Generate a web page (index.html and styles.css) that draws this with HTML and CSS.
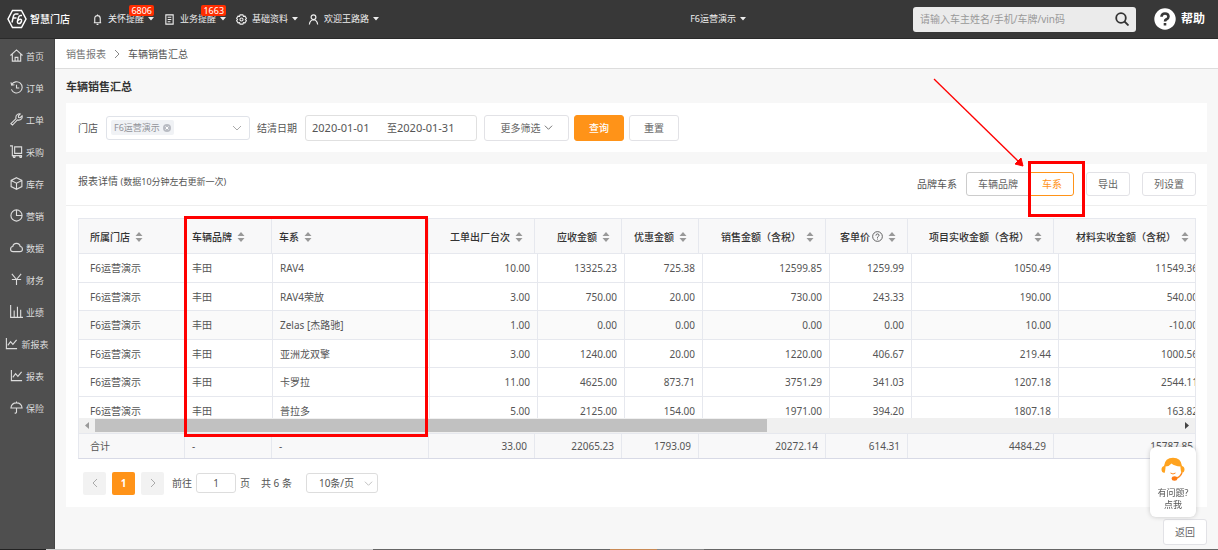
FILE: index.html
```html
<!DOCTYPE html>
<html lang="zh-CN">
<head>
<meta charset="utf-8">
<title>车辆销售汇总</title>
<link rel="stylesheet" href="styles.css">
</head>
<body>
<svg class="defs" aria-hidden="true">
  <symbol id="caret" viewBox="0 0 6 4"><path d="M0 0h6L3 3.500z" fill="currentColor"/></symbol>
  <symbol id="down" viewBox="0 0 10 10"><path d="M1 3l4 4 4-4" fill="none" stroke="currentColor"/></symbol>
  <symbol id="sorter" viewBox="0 0 8 10"><path d="M4 0l3.500 4h-7zM4 10l3.500-4h-7z" fill="#999"/></symbol>
  <symbol id="chart" viewBox="0 0 14 14"><path d="M1.500 1v11.500H13M3 9l3-4 2.500 3L12.500 3" fill="none" stroke="currentColor" stroke-width="1.200"/></symbol>
</svg>

<header class="topbar">
  <a class="logo" href="#">
    <svg width="20" height="20" viewBox="0 0 20 20" fill="none" stroke="#fff" stroke-width="1.500"><path d="M5.500 1.500h9L19 10l-4.500 8.500h-9L1 10z"/><path d="M11.500 5H8.500Q7 5 6.500 7L5 13.500M5.500 9h4M15 6.500h-1.500Q12 6.500 11.500 8.500L10.500 12q-.5 2.500 1.500 2.500T14.500 12q.3-1.700-1.200-1.700T11 11.500"/></svg>
    <span>智慧门店</span>
  </a>
  <nav class="menus">
    <button class="menu"><svg width="11" height="11" viewBox="0 0 12 12" fill="none" stroke="currentColor" stroke-width="1.200"><path d="M2 9.500h8M3 9.500V5q0-3.200 3-3.200T9 5v4.500M5 11.300h2M6 .5v1.300"/></svg><span>关怀提醒</span><svg width="6" height="4"><use href="#caret"/></svg><b class="badge">6806</b></button>
    <button class="menu"><svg width="11" height="11" viewBox="0 0 12 12" fill="none" stroke="currentColor" stroke-width="1.200"><path d="M2 1h8v10H2zM4 3.500h4M4 6h4M4 8.500h3"/></svg><span>业务提醒</span><svg width="6" height="4"><use href="#caret"/></svg><b class="badge">1663</b></button>
    <button class="menu"><svg width="11" height="11" viewBox="0 0 12 12" fill="none" stroke="currentColor" stroke-width="1.200"><path d="M4.500 1h3l.6 1.500 1.700-.2 1.500 2.400L10.300 6l1 1.300-1.500 2.400-1.700-.2L7.500 11h-3l-.6-1.500-1.700.2L.7 7.300 1.700 6 .7 4.700l1.500-2.400 1.700.2z"/><circle cx="6" cy="6" r="1.700"/></svg><span>基础资料</span><svg width="6" height="4"><use href="#caret"/></svg></button>
    <button class="menu"><svg width="11" height="11" viewBox="0 0 12 12" fill="none" stroke="currentColor" stroke-width="1.300"><circle cx="6" cy="3.500" r="2.600"/><path d="M1.500 11.500Q2 6.500 6 6.300q4 .2 4.500 5.200"/></svg><span>欢迎王路路</span><svg width="6" height="4"><use href="#caret"/></svg></button>
  </nav>
  <button class="menu store">F6运营演示<svg width="6" height="4"><use href="#caret"/></svg></button>
  <form class="search">
    <input type="text" aria-label="搜索" placeholder="请输入车主姓名/手机/车牌/vin码">
    <button type="button" aria-label="查找"><svg width="14" height="14" viewBox="0 0 14 14" fill="none" stroke="#333" stroke-width="1.800"><circle cx="6" cy="6" r="4.800"/><path d="M9.500 9.500l4 4"/></svg></button>
  </form>
  <a class="help" href="#"><svg width="22" height="22" viewBox="0 0 22 22"><circle cx="11" cy="11" r="10.700" fill="#fff"/><path d="M7.500 8.800Q7.500 5.500 11 5.500t3.500 3Q14.500 10.300 12.500 11.300 11 12 11 13.500" fill="none" stroke="#383838" stroke-width="2.600"/><path d="M9.700 15h2.600v2.500H9.700z" fill="#383838"/></svg>帮助</a>
</header>

<div class="shell">
  <nav class="sidebar">
    <a href="#"><svg viewBox="0 0 14 14"><path d="M.5 7L7 1l6.500 6M2.500 5.500V13h9V5.500M5.500 13V9h3v4"/></svg>首页</a>
    <a href="#"><svg viewBox="0 0 14 14"><path d="M1.800 4A6 6 0 1 1 1.500 9M1 1.500l.8 3 3-.5M7 4v3.500h3"/></svg>订单</a>
    <a href="#"><svg viewBox="0 0 14 14"><path d="M1 11.500L6.500 6Q5.700 3 8 1.500q1.500-1 3-.5L9 3.200l.3 1.600 1.600.3L13 3q.5 1.800-.6 3.300Q10.800 8.200 8 7.500L2.700 13z"/></svg>工单</a>
    <a href="#"><svg viewBox="0 0 14 14"><path d="M0 1h2.500v10.500H13M5 2h7.500v7H5z"/><circle cx="4.500" cy="12.500" r="1"/><circle cx="11.500" cy="12.500" r="1"/></svg>采购</a>
    <a href="#"><svg viewBox="0 0 14 14"><path d="M7 .7l5.800 3v6.600l-5.800 3-5.800-3V3.700zM1.200 3.700L7 6.700l5.800-3M7 6.700v6.600"/></svg>库存</a>
    <a href="#"><svg viewBox="0 0 14 14"><circle cx="7" cy="7" r="6"/><path d="M7 1v6h6"/></svg>营销</a>
    <a href="#"><svg viewBox="0 0 14 14"><path d="M3.500 11.500Q.6 11.300.6 8.800T3 6Q3.500 2.500 7 2.500T11 6q2.400.3 2.400 2.800t-2.900 2.700z"/></svg>数据</a>
    <a href="#"><svg viewBox="0 0 14 14"><path d="M2 1l5 6 5-6M7 7v6M2 7h10"/></svg>财务</a>
    <a href="#"><svg viewBox="0 0 14 14"><path d="M.7 0v13.300H14M4.500 13V6M8 13V2M11.500 13V5"/></svg>业绩</a>
    <a href="#"><svg viewBox="0 0 14 14"><use href="#chart"/></svg>新报表</a>
    <a href="#"><svg viewBox="0 0 14 14"><use href="#chart"/></svg>报表</a>
    <a href="#"><svg viewBox="0 0 14 14"><path d="M1 7.500Q1.500 2 7 2t6 5.500zM7 .5V2M7 7.500V12q-.2 1.300-2 1"/></svg>保险</a>
  </nav>

  <main class="main">
    <nav class="crumbs"><a href="#">销售报表</a><svg width="6" height="10" viewBox="0 0 6 10"><path d="M1 1l4 4-4 4" fill="none" stroke="#888"/></svg><span>车辆销售汇总</span></nav>
    <div class="content">
      <h1>车辆销售汇总</h1>

      <form class="card filters">
        <span id="store-label">门店</span>
        <button type="button" class="multi" role="combobox" aria-labelledby="store-label" aria-expanded="false"><span class="tag">F6运营演示<svg width="8" height="8" viewBox="0 0 8 8"><circle cx="4" cy="4" r="4" fill="#b9bcc3"/><path d="M2.500 2.500l3 3m0-3l-3 3" stroke="#fff"/></svg></span><svg width="10" height="10"><use href="#down"/></svg></button>
        <label for="from">结清日期</label>
        <span class="range"><input id="from" type="text" value="2020-01-01"><label for="to">至</label><input id="to" type="text" value="2020-01-31"></span>
        <button type="button" class="btn tall more">更多筛选<svg width="9" height="9"><use href="#down"/></svg></button>
        <button type="button" class="btn tall primary">查询</button>
        <button type="button" class="btn tall">重置</button>
      </form>

      <section class="card">
        <div class="card-head">
          <h2>报表详情 <small>(数据10分钟左右更新一次)</small></h2>
          <div class="tools">
            <span>品牌车系</span>
            <div class="segment">
              <button class="btn">车辆品牌</button><button class="btn active">车系</button>
              <i class="mark mark-button"></i>
              <svg class="arrow" width="92" height="90" viewBox="0 0 92 90"><path d="M1 1l84 82" stroke="#f00" stroke-width="1.300"/><path d="M90 88l-8-2 6-6z" fill="#f00" stroke="#f00"/></svg>
            </div>
            <button class="btn">导出</button>
            <button class="btn">列设置</button>
          </div>
        </div>

        <div class="report">
          <div class="grid">
            <table class="head">
              <colgroup><col class="w106"><col class="w87"><col class="w157"><col class="w106"><col class="w87"><col class="w77"><col class="w127"><col class="w82"><col class="w146"><col class="w147"></colgroup>
              <thead><tr>
                <th><button>所属门店<svg><use href="#sorter"/></svg></button></th>
                <th><button>车辆品牌<svg><use href="#sorter"/></svg></button></th>
                <th><button>车系<svg><use href="#sorter"/></svg></button></th>
                <th><button>工单出厂台次<svg><use href="#sorter"/></svg></button></th>
                <th><button>应收金额<svg><use href="#sorter"/></svg></button></th>
                <th><button>优惠金额<svg><use href="#sorter"/></svg></button></th>
                <th><button>销售金额（含税）<svg><use href="#sorter"/></svg></button></th>
                <th><button>客单价<svg class="tip" viewBox="0 0 12 12" fill="none" stroke="#555"><circle cx="6" cy="6" r="5.300"/><path d="M4.300 5Q4.300 3.200 6 3.200T7.700 4.800Q7.700 5.500 6 6.600v.9M6 8.300v1"/></svg><svg><use href="#sorter"/></svg></button></th>
                <th><button>项目实收金额（含税）<svg><use href="#sorter"/></svg></button></th>
                <th><button>材料实收金额（含税）<svg><use href="#sorter"/></svg></button></th>
              </tr></thead>
            </table>
            <div class="rows">
              <table>
                <colgroup><col class="w106"><col class="w88"><col class="w157"><col class="w108"><col class="w87"><col class="w78"><col class="w127"><col class="w82"><col class="w147"><col class="w147"></colgroup>
                <tbody>
                  <tr><td>F6运营演示</td><td>丰田</td><td>RAV4</td><td>10.00</td><td>13325.23</td><td>725.38</td><td>12599.85</td><td>1259.99</td><td>1050.49</td><td>11549.36</td></tr>
                  <tr><td>F6运营演示</td><td>丰田</td><td>RAV4荣放</td><td>3.00</td><td>750.00</td><td>20.00</td><td>730.00</td><td>243.33</td><td>190.00</td><td>540.00</td></tr>
                  <tr class="hover"><td>F6运营演示</td><td>丰田</td><td>Zelas [杰路驰]</td><td>1.00</td><td>0.00</td><td>0.00</td><td>0.00</td><td>0.00</td><td>10.00</td><td>-10.00</td></tr>
                  <tr><td>F6运营演示</td><td>丰田</td><td>亚洲龙双擎</td><td>3.00</td><td>1240.00</td><td>20.00</td><td>1220.00</td><td>406.67</td><td>219.44</td><td>1000.56</td></tr>
                  <tr><td>F6运营演示</td><td>丰田</td><td>卡罗拉</td><td>11.00</td><td>4625.00</td><td>873.71</td><td>3751.29</td><td>341.03</td><td>1207.18</td><td>2544.11</td></tr>
                  <tr><td>F6运营演示</td><td>丰田</td><td>普拉多</td><td>5.00</td><td>2125.00</td><td>154.00</td><td>1971.00</td><td>394.20</td><td>1807.18</td><td>163.82</td></tr>
                </tbody>
              </table>
            </div>
            <div class="scrollbar">
              <svg viewBox="0 0 16 15"><path d="M10 4v7L6 7.500z" fill="#999"/></svg>
              <div class="track"><div class="thumb"></div></div>
              <svg viewBox="0 0 16 15"><path d="M6 4v7l4-3.500z" fill="#444"/></svg>
            </div>
            <table class="total">
              <colgroup><col class="w106"><col class="w87"><col class="w157"><col class="w106"><col class="w87"><col class="w77"><col class="w127"><col class="w82"><col class="w146"><col class="w147"></colgroup>
              <tbody><tr><td>合计</td><td>-</td><td>-</td><td>33.00</td><td>22065.23</td><td>1793.09</td><td>20272.14</td><td>614.31</td><td>4484.29</td><td>15787.85</td></tr></tbody>
            </table>
          </div>
          <i class="mark mark-columns"></i>
        </div>

        <div class="pager">
          <button class="page" aria-label="上一页" disabled><svg width="10" height="10" viewBox="0 0 10 10"><path d="M7 1L3 5l4 4" fill="none" stroke="#aaa"/></svg></button>
          <button class="page current">1</button>
          <button class="page" aria-label="下一页" disabled><svg width="10" height="10" viewBox="0 0 10 10"><path d="M3 1l4 4-4 4" fill="none" stroke="#aaa"/></svg></button>
          <label class="jump">前往<input type="text" value="1">页</label>
          <span class="count">共 6 条</span>
          <span class="size"><select aria-label="每页条数"><option>10条/页</option></select><svg width="9" height="9"><use href="#down"/></svg></span>
        </div>
      </section>

      <div class="actions"><button class="btn tall back">返回</button></div>
    </div>
  </main>
</div>
<footer class="strip"></footer>

<button class="service">
  <svg width="24" height="24" viewBox="0 0 24 24"><path d="M3 9Q4 .8 12 .8T21 9q2.500.5 2.500 3.500T20.500 16L19 11H5l-1.500 5Q.5 15.500.5 12.500T3 9z" fill="#ffa31f"/><path d="M4.500 12.500V9.500q4-.3 6-3 3 2.700 9 3v3q0 7-7.500 7t-7.500-7z" fill="#fff"/><path d="M9.500 16q2.500 2 5 0" fill="none" stroke="#ff8a1f"/><path d="M21 15.500q-1.500 5-7 6" fill="none" stroke="#ff8a1f" stroke-width="1.400"/><ellipse cx="13.500" cy="21.500" rx="2.800" ry="2.200" fill="#ff7a12"/></svg>
  <span>有问题?</span><span>点我</span>
</button>
</body>
</html>
```
FILE: styles.css
```css
* { box-sizing: border-box; }
body {
  margin: 0;
  min-height: 100vh;
  display: flex;
  flex-direction: column;
  background: #f7f7f7;
  color: #555;
  font: 10px/16px "Noto Sans", "Noto Sans CJK SC", sans-serif;
  overflow-x: hidden;
}
button, input, select { font: inherit; color: inherit; margin: 0; padding: 0; }
button { background: none; border: 0; white-space: nowrap; }
a { color: inherit; text-decoration: none; }
svg { flex: none; display: block; }
.defs { position: absolute; width: 0; height: 0; }

.topbar {
  height: 39px;
  display: flex;
  align-items: center;
  padding: 0 13px 0 7px;
  background: #383838;
  border-bottom: 1px solid #2a2a2a;
  color: #fff;
}
.logo { display: flex; align-items: center; gap: 3px; font-weight: 500; }
.menus { display: flex; gap: 10px; margin-left: 22px; }
.menu { position: relative; display: flex; align-items: center; gap: 4px; font-size: 9px; color: #eee; }
.menus svg + span { margin-left: 1px; }
.badge {
  position: absolute;
  top: -6px;
  right: 0;
  padding: 0 2px;
  border-radius: 2px;
  background: #ff2d00;
  color: #fff;
  font-size: 9px;
  font-weight: 400;
  line-height: 11px;
}
.store { margin-left: auto; margin-right: 167px; }
.search {
  display: flex;
  align-items: center;
  width: 223px;
  height: 25px;
  padding: 0 7px;
  border-radius: 3px;
  background: #ebebeb;
}
.search input { flex: 1; min-width: 0; border: 0; background: none; outline: 0; }
.search input::placeholder { color: #999; }
.help { display: flex; align-items: center; gap: 5px; margin-left: 18px; font-size: 12px; font-weight: 700; }

.shell { flex: 1; display: flex; }
.sidebar { width: 55px; flex: none; padding-top: 1px; background: #4f4f4f; border-right: 1px solid #444; color: #ddd; font-size: 9px; }
.sidebar a { height: 32px; display: flex; align-items: center; justify-content: center; gap: 3px; line-height: 12px; padding-top: 2px; }
.sidebar svg { width: 13px; height: 13px; margin-bottom: 3px; fill: none; stroke: currentColor; stroke-width: 1.2; }

.main { flex: 1; min-width: 0; display: flex; flex-direction: column; }
.crumbs { height: 30px; display: flex; align-items: center; gap: 8px; padding: 0 11px; background: #fff; border-bottom: 1px solid #ddd; color: #777; }
.crumbs span { color: #555; }
.content { padding: 10px 11px 0; }
h1 { margin: 0 0 8px; font-size: 11px; line-height: 16px; font-weight: 700; color: #333; }
.card { margin-bottom: 12px; background: #fff; }

.filters { height: 49px; display: flex; align-items: center; padding: 0 12px; }
.multi {
  display: flex;
  align-items: center;
  justify-content: space-between;
  width: 144px;
  height: 24px;
  margin: 0 7px 0 8px;
  padding: 0 7px 0 4px;
  border: 1px solid #e0e3e9;
  border-radius: 3px;
  color: #aaa;
}
.tag { display: flex; align-items: center; gap: 3px; padding: 0 3px; border-radius: 2px; background: #f0f2f5; color: #909399; font-size: 9px; line-height: 15px; }
.range { display: flex; align-items: center; width: 172px; height: 26px; margin: 0 7px 0 8px; padding: 0 6px; border: 1px solid #e0e0e0; border-radius: 3px; }
.range input { width: 75px; border: 0; outline: 0; background: none; font-size: 11px; }
.btn {
  display: flex;
  align-items: center;
  justify-content: center;
  gap: 3px;
  height: 24px;
  padding: 0 11px;
  border: 1px solid #e2e2e6;
  border-radius: 3px;
  background: #fff;
  color: #666;
}
.tall { height: 26px; padding: 0 14px; margin-right: 5px; }
.more { width: 85px; }
.primary { border-color: #ff9318; background: #ff9318; color: #fff; font-weight: 500; }

.card-head { height: 42px; display: flex; align-items: center; justify-content: space-between; padding: 0 11px 2px 12px; border-bottom: 1px solid #eee; }
h2 { margin: 0; padding-bottom: 4px; font-size: 10px; font-weight: 400; }
small { font-size: 9px; }
.tools { display: flex; align-items: center; gap: 12px; }
.tools > span { margin-right: -3px; }
.segment { position: relative; display: flex; }
.segment .btn { border-radius: 3px 0 0 3px; border-color: #ccc; }
.segment .active { border-radius: 0 3px 3px 0; border-color: #ff9318; color: #ff9318; }
.mark { position: absolute; border: 3px solid #f00; pointer-events: none; }
.mark-button { top: -11px; right: -11px; width: 57px; height: 56px; }
.arrow { position: absolute; right: 49px; bottom: 28px; pointer-events: none; }

.report { position: relative; padding: 12px 11px 0 12px; }
.grid { border: 1px solid #e6e8ee; border-bottom-color: #d8dae6; overflow: hidden; }
.mark-columns { left: 118px; top: 10px; width: 244px; bottom: 22px; z-index: 1; }
table { table-layout: fixed; width: 0; border-collapse: separate; border-spacing: 0; }
.w77 { width: 77px; } .w78 { width: 78px; } .w82 { width: 82px; } .w87 { width: 87px; } .w88 { width: 88px; }
.w106 { width: 106px; } .w108 { width: 108px; } .w127 { width: 127px; }
.w146 { width: 146px; } .w147 { width: 147px; } .w157 { width: 157px; }
th, td { padding: 0 7px; border-right: 1px solid #e6e8ee; text-align: right; white-space: nowrap; }
th { height: 35px; padding: 0 11px 0 7px; background: #f8f8f9; border-bottom: 1px solid #e6e8ee; color: #333; font-weight: 500; }
th button { display: inline-flex; align-items: center; gap: 5px; font-weight: 500; vertical-align: middle; }
th svg { width: 8px; height: 10px; }
th .tip { width: 11px; height: 11px; margin-left: -3px; }
th:nth-child(-n+3), td:nth-child(-n+3) { text-align: left; }
th:first-child, td:first-child { padding-left: 11px; }
.rows { height: 164px; overflow: hidden; }
.rows td { height: 29px; border-bottom: 1px solid #e6e8ee; }
.rows tr:nth-child(even) td { height: 28px; }
.hover td { background: #fafafa; }
.scrollbar { display: flex; height: 15px; background: #f0f0f0; }
.scrollbar svg { width: 16px; height: 15px; }
.track { flex: 1; padding: 1px 0; }
.thumb { width: 62%; height: 13px; background: #c1c1c1; }
.total td { height: 25px; background: #f8f8f9; border-top: 1px solid #e6e8ee; }

.pager { display: flex; align-items: center; padding: 12px 17px; height: 48px; }
.page { display: flex; align-items: center; justify-content: center; width: 23px; height: 23px; margin-right: 6px; border-radius: 2px; background: #f2f2f2; }
.current { background: #ff9318; color: #fff; font-weight: 700; }
.jump { display: flex; align-items: center; gap: 4px; margin-left: 2px; }
.jump input { width: 40px; height: 20px; border: 1px solid #ddd; border-radius: 3px; text-align: center; }
.count { margin: 0 14px 0 11px; }
.size { position: relative; color: #bbb; }
.size select { appearance: none; width: 72px; height: 20px; padding-left: 12px; border: 1px solid #ddd; border-radius: 3px; background: #fff; color: #555; }
.size svg { position: absolute; right: 5px; top: 6px; pointer-events: none; }

.actions { display: flex; justify-content: flex-end; padding-bottom: 3px; }
.back { padding: 0 11px; margin: 0; }
.strip {
  height: 1px;
  background: linear-gradient(90deg, #222 0 46px, #ccc 46px 373px, #666 373px 610px, #c98a55 610px 657px, #888 657px 704px, #666 704px);
}
.service {
  position: fixed;
  right: 22px;
  bottom: 33px;
  z-index: 2;
  width: 46px;
  height: 70px;
  display: flex;
  flex-direction: column;
  align-items: center;
  border-radius: 6px;
  background: #fff;
  box-shadow: 0 0 5px #0003;
  font-size: 9px;
  line-height: 12px;
  padding-top: 10px;
}
.service svg { margin-bottom: 6px; }
```
